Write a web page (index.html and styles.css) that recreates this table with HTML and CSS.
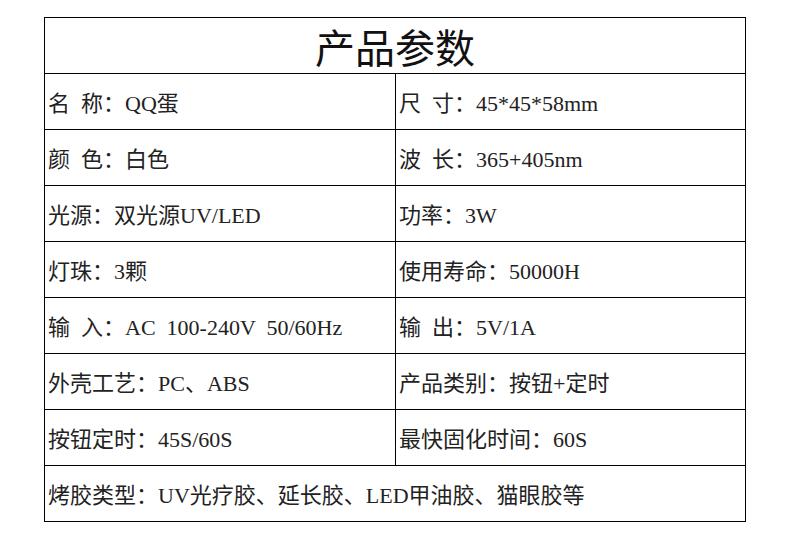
FILE: index.html
```html
<!DOCTYPE html>
<html lang="zh-CN">
<head>
<meta charset="utf-8">
<title>产品参数</title>
<link rel="stylesheet" href="styles.css">
</head>
<body>
<div class="spec">
  <div class="cell title">产品参数</div>
  <div class="cell">名 称：QQ蛋</div>
  <div class="cell">尺 寸：45*45*58mm</div>
  <div class="cell">颜 色：白色</div>
  <div class="cell">波 长：365+405nm</div>
  <div class="cell">光源：双光源UV/LED</div>
  <div class="cell">功率：3W</div>
  <div class="cell">灯珠：3颗</div>
  <div class="cell">使用寿命：50000H</div>
  <div class="cell">输 入：AC 100-240V 50/60Hz</div>
  <div class="cell">输 出：5V/1A</div>
  <div class="cell">外壳工艺：PC、ABS</div>
  <div class="cell">产品类别：按钮+定时</div>
  <div class="cell">按钮定时：45S/60S</div>
  <div class="cell">最快固化时间：60S</div>
  <div class="cell wide">烤胶类型：UV光疗胶、延长胶、LED甲油胶、猫眼胶等</div>
</div>
</body>
</html>
```

FILE: styles.css
```css
html, body {
  margin: 0;
  padding: 0;
  background: #ffffff;
}

body {
  font-family: "Liberation Serif", "Noto Sans CJK SC", serif;
  color: #222222;
}

.spec {
  margin: 17px 0 0 44px;
  width: 702px;
  box-sizing: border-box;
  border: 1px solid #000000;
  background: #000000;
  display: grid;
  grid-template-columns: 350px 349px;
  grid-auto-rows: 55px;
  gap: 1px;
}

.cell {
  background: #ffffff;
  display: flex;
  align-items: center;
  padding-left: 3px;
  padding-bottom: 2px;
  font-size: 22px;
  word-spacing: 0.25em;
  white-space: nowrap;
}

.title {
  grid-column: 1 / 3;
  justify-content: center;
  padding-left: 0;
  padding-bottom: 0;
  font-size: 40px;
  color: #111111;
}

.wide {
  grid-column: 1 / 3;
}
```
